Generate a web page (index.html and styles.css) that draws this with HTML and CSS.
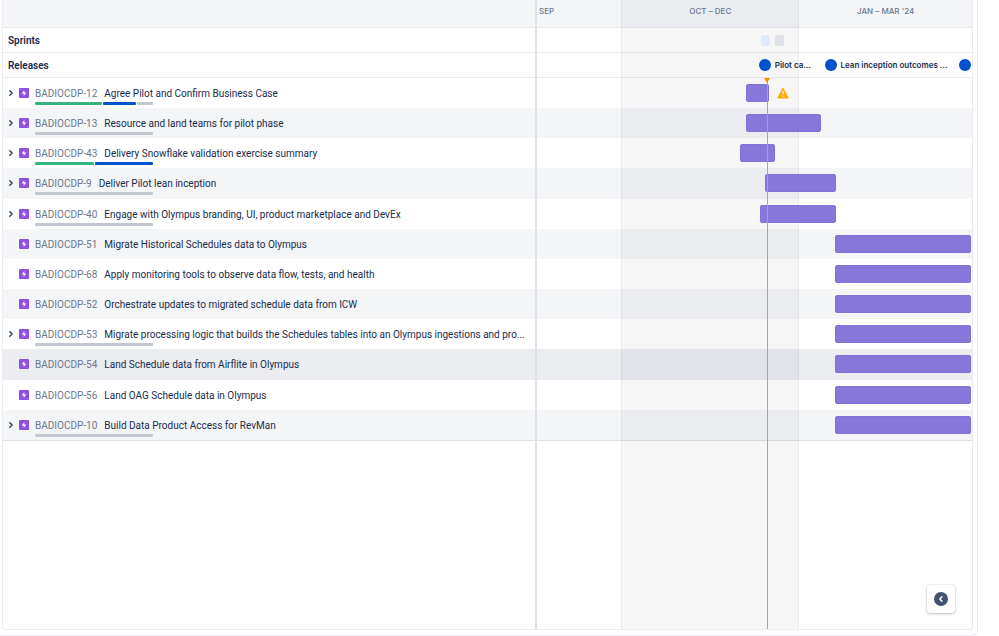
FILE: index.html
```html
<!DOCTYPE html>
<html lang="en">
<head>
<meta charset="utf-8">
<title>Roadmap</title>
<link rel="stylesheet" href="styles.css">
</head>
<body>
<svg class="defs" aria-hidden="true">
  <symbol id="epic" viewBox="0 0 10 10"><rect width="10" height="10" rx="1" fill="#904ee2"/><path d="M5.3 1.9 2.7 5.4h2v2.7l2.6-3.5h-2z" fill="#fff"/></symbol>
  <symbol id="chev" viewBox="0 0 6 8"><path d="M1.8 1.8 4.2 4 1.8 6.2" fill="none" stroke="#253858" stroke-width="1.3" stroke-linecap="round" stroke-linejoin="round"/></symbol>
</svg>
<main class="panel">
  <section class="board">
    <div class="months" aria-hidden="true"><i></i><i class="shade"></i><i></i></div>
    <header class="row head">
      <div class="info"></div>
      <div class="time quarters"><span class="first">SEP</span><span>OCT – DEC</span><span>JAN – MAR '24</span></div>
    </header>
    <div class="row lane">
      <h2 class="info">Sprints</h2>
      <div class="time sprints"><i class="active"></i><i></i></div>
    </div>
    <div class="row lane">
      <h2 class="info">Releases</h2>
      <div class="time releases">
        <span class="release" style="margin-left:51%;width:15.1%"><i></i>Pilot ca...</span>
        <span class="release" style="width:31%"><i></i>Lean inception outcomes ...</span>
        <span class="release"><i></i></span>
      </div>
    </div>
    <div class="plan">
      <div class="today" aria-hidden="true"><svg viewBox="0 0 6 5"><path d="M0 0h6L3 5z" fill="#ff8b00"/></svg></div>
      <div class="issues">
        <div class="row issue">
          <div class="info"><button class="toggle" aria-label="Expand"><svg><use href="#chev"/></svg></button><svg class="epic"><use href="#epic"/></svg><div class="text"><p><a href="#">BADIOCDP-12</a>Agree Pilot and Confirm Business Case</p><div class="progress"><i class="done" style="flex-grow:66"></i><i class="doing" style="flex-grow:33"></i><i style="flex-grow:16"></i></div></div></div>
          <div class="time"><div class="bar" style="margin-left:48.1%;width:5.3%"></div><svg class="warn" viewBox="0 0 12 12" role="img" aria-label="Warning"><path d="M6 1.2 11.3 11H.7z" fill="#ffab00" stroke="#ffab00" stroke-linejoin="round"/><path d="M6 4.2v3.3M6 8.8v1" stroke="#fff" stroke-width="1.3"/></svg></div>
        </div>
        <div class="row issue">
          <div class="info"><button class="toggle" aria-label="Expand"><svg><use href="#chev"/></svg></button><svg class="epic"><use href="#epic"/></svg><div class="text"><p><a href="#">BADIOCDP-13</a>Resource and land teams for pilot phase</p><div class="progress"><i></i></div></div></div>
          <div class="time"><div class="bar" style="margin-left:48.1%;width:17.2%"></div></div>
        </div>
        <div class="row issue">
          <div class="info"><button class="toggle" aria-label="Expand"><svg><use href="#chev"/></svg></button><svg class="epic"><use href="#epic"/></svg><div class="text"><p><a href="#">BADIOCDP-43</a>Delivery Snowflake validation exercise summary</p><div class="progress"><i class="done"></i><i class="doing"></i></div></div></div>
          <div class="time"><div class="bar" style="margin-left:46.7%;width:8%"></div></div>
        </div>
        <div class="row issue">
          <div class="info"><button class="toggle" aria-label="Expand"><svg><use href="#chev"/></svg></button><svg class="epic"><use href="#epic"/></svg><div class="text"><p><a href="#">BADIOCDP-9</a>Deliver Pilot lean inception</p><div class="progress"><i></i></div></div></div>
          <div class="time"><div class="bar" style="margin-left:52.5%;width:16.3%"></div></div>
        </div>
        <div class="row issue">
          <div class="info"><button class="toggle" aria-label="Expand"><svg><use href="#chev"/></svg></button><svg class="epic"><use href="#epic"/></svg><div class="text"><p><a href="#">BADIOCDP-40</a>Engage with Olympus branding, UI, product marketplace and DevEx</p><div class="progress"><i></i></div></div></div>
          <div class="time"><div class="bar" style="margin-left:51.2%;width:17.6%"></div></div>
        </div>
        <div class="row issue">
          <div class="info"><span class="toggle"></span><svg class="epic"><use href="#epic"/></svg><div class="text"><p><a href="#">BADIOCDP-51</a>Migrate Historical Schedules data to Olympus</p></div></div>
          <div class="time"><div class="bar" style="margin-left:68.4%;width:31.3%"></div></div>
        </div>
        <div class="row issue">
          <div class="info"><span class="toggle"></span><svg class="epic"><use href="#epic"/></svg><div class="text"><p><a href="#">BADIOCDP-68</a>Apply monitoring tools to observe data flow, tests, and health</p></div></div>
          <div class="time"><div class="bar" style="margin-left:68.4%;width:31.3%"></div></div>
        </div>
        <div class="row issue">
          <div class="info"><span class="toggle"></span><svg class="epic"><use href="#epic"/></svg><div class="text"><p><a href="#">BADIOCDP-52</a>Orchestrate updates to migrated schedule data from ICW</p></div></div>
          <div class="time"><div class="bar" style="margin-left:68.4%;width:31.3%"></div></div>
        </div>
        <div class="row issue">
          <div class="info"><button class="toggle" aria-label="Expand"><svg><use href="#chev"/></svg></button><svg class="epic"><use href="#epic"/></svg><div class="text"><p><a href="#">BADIOCDP-53</a>Migrate processing logic that builds the Schedules tables into an Olympus ingestions and pro...</p><div class="progress"><i></i></div></div></div>
          <div class="time"><div class="bar" style="margin-left:68.4%;width:31.3%"></div></div>
        </div>
        <div class="row issue selected">
          <div class="info"><span class="toggle"></span><svg class="epic"><use href="#epic"/></svg><div class="text"><p><a href="#">BADIOCDP-54</a>Land Schedule data from Airflite in Olympus</p></div></div>
          <div class="time"><div class="bar" style="margin-left:68.4%;width:31.3%"></div></div>
        </div>
        <div class="row issue">
          <div class="info"><span class="toggle"></span><svg class="epic"><use href="#epic"/></svg><div class="text"><p><a href="#">BADIOCDP-56</a>Land OAG Schedule data in Olympus</p></div></div>
          <div class="time"><div class="bar" style="margin-left:68.4%;width:31.3%"></div></div>
        </div>
        <div class="row issue">
          <div class="info"><button class="toggle" aria-label="Expand"><svg><use href="#chev"/></svg></button><svg class="epic"><use href="#epic"/></svg><div class="text"><p><a href="#">BADIOCDP-10</a>Build Data Product Access for RevMan</p><div class="progress"><i></i></div></div></div>
          <div class="time"><div class="bar" style="margin-left:68.4%;width:31.3%"></div></div>
        </div>
      </div>
    </div>
    <button class="legend" aria-label="Show legend"><svg viewBox="0 0 14 14"><circle cx="7" cy="7" r="7" fill="#42526e"/><path d="M8 4.8 5.8 7 8 9.2" fill="none" stroke="#fff" stroke-width="1.5" stroke-linecap="round" stroke-linejoin="round"/></svg></button>
  </section>
</main>
</body>
</html>
```
FILE: styles.css
```css
* { box-sizing: border-box; }
body {
  margin: 0;
  background: #fff;
  color: #172b4d;
  font: 10px/14px Roboto, "Liberation Sans", sans-serif;
}
p, h2 { margin: 0; font-size: inherit; }
i { display: block; }
button { border: 0; background: none; padding: 0; cursor: pointer; }
.defs { position: absolute; width: 0; height: 0; }

.panel {
  height: 100vh;
  margin-right: 21px;
  padding: 0 4px 5px 2px;
  border: solid #ebecf0;
  border-width: 0 1px 1px 0;
  border-radius: 0 0 6px 0;
}
.board {
  --split: 54.9%;
  --cols: 84fr 177fr 172fr;
  position: relative;
  display: flex;
  flex-direction: column;
  height: 100%;
  border: 1px solid #ebecf0;
  border-top: 0;
  border-radius: 0 0 3px 3px;
}
.row { display: grid; grid-template-columns: var(--split) 1fr; }
.time { position: relative; z-index: 2; min-width: 0; margin-left: 2px; }

.months {
  position: absolute;
  z-index: 1;
  inset: 0 0 0 var(--split);
  display: grid;
  grid-template-columns: var(--cols);
  border-left: 2px solid #dfe1e6;
  pointer-events: none;
}
.months .shade {
  background: rgba(23, 23, 43, 0.04);
  border: solid rgba(9, 30, 66, 0.06);
  border-width: 0 1px;
}

.head { height: 28px; background: #f4f5f7; border-bottom: 1px solid #e6e8ec; }
.quarters {
  display: grid;
  grid-template-columns: var(--cols);
  padding-top: 4px;
  color: #6b778c;
  font-family: Inter, "Liberation Sans", sans-serif;
  font-size: 8px;
  font-weight: 500;
  text-align: center;
}
.quarters .first { padding-left: 2px; text-align: left; }

.lane { height: 25px; align-items: center; border-bottom: 1px solid #ebecf0; }
.lane .info { padding: 1px 0 0 5px; font-weight: 600; }
.sprints { display: flex; gap: 5px; padding-left: 51.2%; }
.sprints i { width: 9px; height: 11px; border-radius: 2px; background: #dfe1e6; }
.sprints .active { background: #deebff; }
.releases { display: flex; font-family: Inter, "Liberation Sans", sans-serif; font-size: 8px; font-weight: 600; white-space: nowrap; }
.release { display: flex; flex: none; align-items: center; gap: 4px; }
.release i { width: 12px; height: 12px; border-radius: 50%; background: #0052cc; }

.plan { position: relative; flex: 1; }
.issues {
  display: grid;
  grid-template-rows: repeat(12, 1fr);
  height: 363px;
  border-bottom: 1px solid #dfe1e6;
}
.issue:nth-child(even) { background: #f4f5f7; }
.issue.selected { background: #ebecf0; }
.issue .info { display: flex; padding: 8px 8px 0 4px; min-width: 0; }
.toggle { width: 8px; height: 14px; margin-right: 4px; display: flex; align-items: center; justify-content: center; }
.toggle svg { width: 6px; height: 8px; }
.epic { flex: none; width: 10px; height: 10px; margin: 2px 6px 0 0; }
.text { min-width: 0; }
.text p { line-height: 16px; white-space: nowrap; }
.text a { margin-right: 7px; color: #6b778c; text-decoration: none; }
.progress { display: flex; gap: 1px; width: 118px; height: 3px; }
.progress i { flex: 1 1 0; border-radius: 1px; background: #c1c7d0; }
.progress .done { background: #36b37e; }
.progress .doing { background: #0052cc; }
.issue .time { display: flex; align-items: flex-start; padding-top: 6px; }
.bar { flex: none; height: 18px; border: 1px solid #8270db; border-radius: 2px; background: #8777d9; }
.warn { width: 12px; height: 12px; margin: 3px 0 0 8px; }

.today {
  position: absolute;
  z-index: 3;
  top: 0;
  bottom: 0;
  left: 78.8%;
  border-left: 1px solid #f79232;
}
.today svg { display: block; width: 6px; height: 5px; margin-left: -4px; }

.legend {
  position: absolute;
  z-index: 4;
  right: 17px;
  bottom: 16px;
  display: grid;
  place-items: center;
  width: 28px;
  height: 28px;
  border-radius: 3px;
  background: #fff;
  box-shadow: 0 1px 3px rgba(9, 30, 66, 0.25), 0 0 1px rgba(9, 30, 66, 0.3);
}
.legend svg { width: 14px; height: 14px; }
```
